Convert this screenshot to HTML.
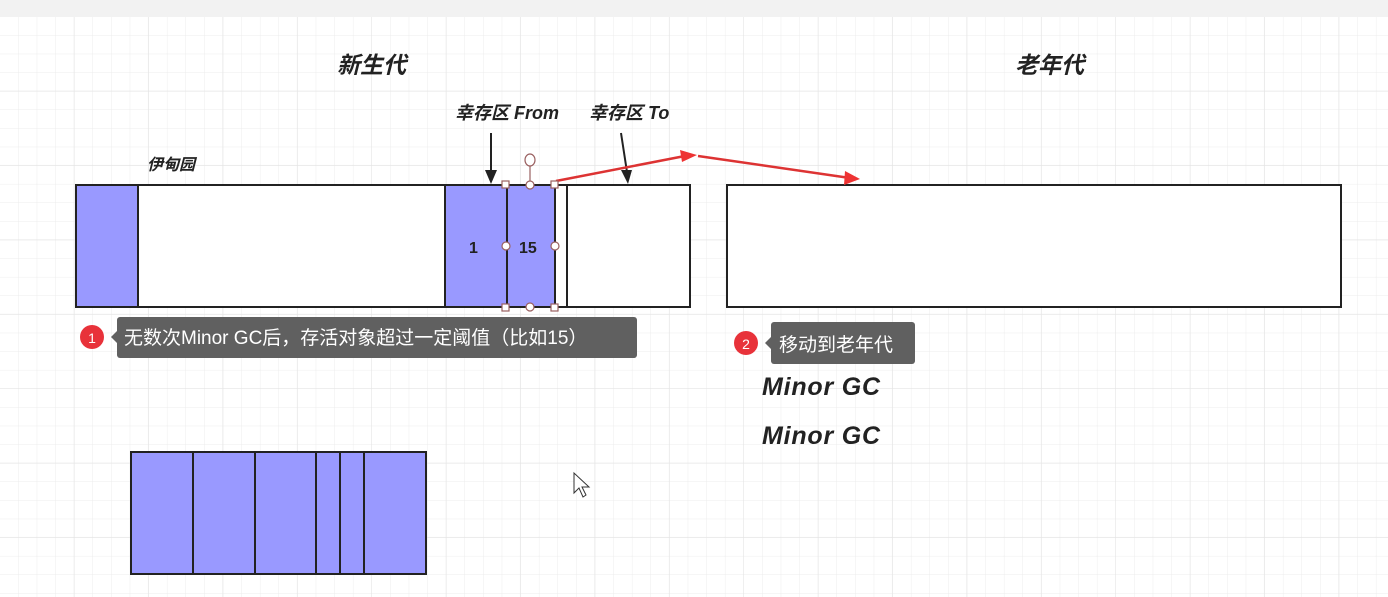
<!DOCTYPE html>
<html><head><meta charset="utf-8"><style>
body{margin:0;width:1388px;height:597px;overflow:hidden;background:#fff;font-family:"Liberation Sans","Noto Sans CJK SC",sans-serif}
</style></head><body>
<svg width="1388" height="597" xmlns="http://www.w3.org/2000/svg" style="position:absolute;left:0;top:0">
<defs>
<pattern id="g" x="0" y="17" width="18.6" height="18.6" patternUnits="userSpaceOnUse"><path d="M18.6 0V18.6M0 18.6H18.6" stroke="#ececec" stroke-width="1" fill="none"/></pattern>
<pattern id="G" x="0" y="17" width="74.4" height="74.4" patternUnits="userSpaceOnUse"><path d="M74.4 0V74.4M0 74.4H74.4" stroke="#e4e4e4" stroke-width="1.2" fill="none"/></pattern>
</defs>
<rect x="0" y="17" width="1388" height="580" fill="url(#g)"/>
<rect x="0" y="17" width="1388" height="580" fill="url(#G)"/>
<rect x="0" y="0" width="1388" height="17" fill="#f2f2f2"/>
<g font-weight="bold" font-style="italic" fill="#222" font-family="'Liberation Sans','Noto Sans CJK SC',sans-serif">
<text x="337" y="73" font-size="23">新生代</text>
<text x="1015" y="73" font-size="23">老年代</text>
<text x="455" y="119" font-size="18">幸存区 From</text>
<text x="589" y="119" font-size="18">幸存区 To</text>
<text x="147" y="170" font-size="16">伊甸园</text>
<text x="762" y="395" font-size="25" textLength="118">Minor GC</text>
<text x="762" y="444" font-size="25" textLength="118">Minor GC</text>
</g>
<g stroke="#222" stroke-width="2">
<rect x="76" y="185" width="614" height="122" fill="#fff"/>
<rect x="76" y="185" width="62" height="122" fill="#9999ff"/>
<rect x="445" y="185" width="62" height="122" fill="#9999ff"/>
<rect x="507" y="185" width="48" height="122" fill="#9999ff"/>
<line x1="567" y1="185" x2="567" y2="307"/>
<rect x="727" y="185" width="614" height="122" fill="#fff"/>
<rect x="131" y="452" width="295" height="122" fill="#9999ff"/>
<path d="M193 452V574M255 452V574M316 452V574M340 452V574M364 452V574"/>
<path d="M491 133V172M621 133L627 172"/>
</g>
<path d="M485 170L491 184L497 170Z M621 170L628 184L632 170Z" fill="#222"/>
<g font-weight="bold" fill="#222" font-size="16"><text x="469" y="253">1</text><text x="519" y="253">15</text></g>
<g stroke="#d33" stroke-width="2.5" fill="none"><path d="M556 181L690 155M698 156L850 178"/></g>
<path d="M680 150L697 155L682 162Z M845 171L860 179L844 185Z" fill="#e33"/>
<g stroke="#9a6060" stroke-width="1.2" fill="#fff">
<line x1="530" y1="166" x2="530" y2="185"/>
<ellipse cx="530" cy="160" rx="5" ry="6"/>
<rect x="502" y="181" width="7" height="7"/><rect x="551" y="181" width="7" height="7"/>
<rect x="502" y="304" width="7" height="7"/><rect x="551" y="304" width="7" height="7"/>
<circle cx="530" cy="185" r="4"/><circle cx="530" cy="307" r="4"/>
<circle cx="506" cy="246" r="4"/><circle cx="555" cy="246" r="4"/>
</g>
<circle cx="92" cy="337" r="12" fill="#e8323a"/><text x="92" y="343" font-size="14" fill="#fff" text-anchor="middle">1</text>
<path d="M117 331L111 337L117 343Z" fill="#606060"/>
<rect x="117" y="317" width="520" height="41" rx="3" fill="#606060"/>
<text x="124" y="344" font-size="19" fill="#fff">无数次Minor GC后，存活对象超过一定阈值（比如15）</text>
<circle cx="746" cy="343" r="12" fill="#e8323a"/><text x="746" y="349" font-size="14" fill="#fff" text-anchor="middle">2</text>
<path d="M771 337L765 343L771 349Z" fill="#606060"/>
<rect x="771" y="322" width="144" height="42" rx="3" fill="#606060"/>
<text x="779" y="351" font-size="19" fill="#fff">移动到老年代</text>
<path d="M574 473V493L579 488L583 497L586 495L582 487L589 487Z" fill="#fff" stroke="#333" stroke-width="1"/>
</svg>
</body></html>
